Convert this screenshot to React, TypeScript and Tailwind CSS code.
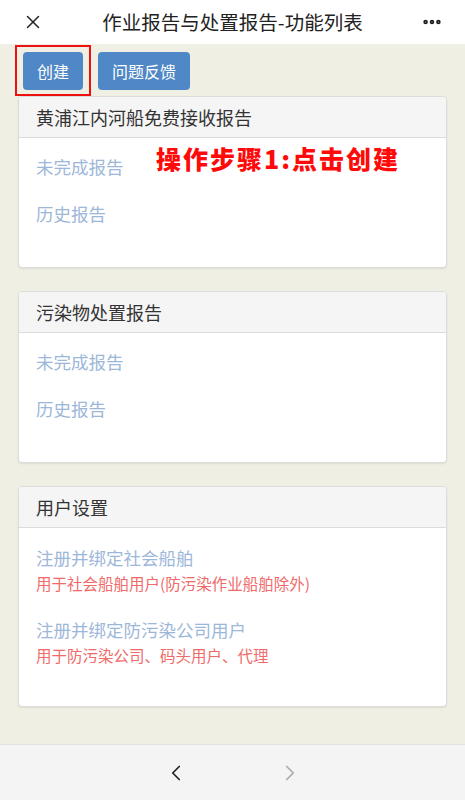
import { X, MoreHorizontal, ChevronLeft, ChevronRight } from 'lucide-react';

const font = { fontFamily: '"Noto Sans CJK SC", "Noto Sans", sans-serif' };

function Card({ title, children, bodyClass }: { title: string; children: React.ReactNode; bodyClass: string }) {
  return (
    <div className="mx-[18px] rounded-[4px] border border-[#dcdcdc] bg-white shadow-[0_1px_2px_rgba(0,0,0,0.08)] overflow-hidden">
      <div className="h-[41px] flex items-center px-[17px] bg-[#f5f5f5] border-b border-[#dcdcdc] text-[18px] text-[#333]">
        {title}
      </div>
      <div className={bodyClass}>{children}</div>
    </div>
  );
}

function Link({ children, className }: { children: React.ReactNode; className?: string }) {
  return <div className={'text-[17.5px] leading-[22px] text-[#9db7d9] ' + (className ?? '')}>{children}</div>;
}

export default function App() {
  return (
    <div className="w-[465px] h-[800px] flex flex-col bg-[#efefe3]" style={font}>
      <div className="h-[44px] bg-white flex items-center justify-between px-[22px] shrink-0">
        <X className="w-[22px] h-[22px] text-[#222]" strokeWidth={1.6} />
        <div className="text-[19.5px] text-[#222]">作业报告与处置报告-功能列表</div>
        <MoreHorizontal className="w-[22px] h-[22px] text-[#222]" strokeWidth={3} />
      </div>

      <div className="flex-1 flex flex-col">
        <div className="flex items-center gap-[7px] pl-[15px] h-[52px]">
          <div className="border-2 border-[#ee1111] p-[6px] pt-[5px] pb-[4px]">
            <button className="w-[60px] h-[38px] rounded-[4px] bg-[#5087c6] text-white text-[16px]">创建</button>
          </div>
          <button className="w-[92px] h-[38px] rounded-[4px] bg-[#5087c6] text-white text-[16px] mt-[1px]">问题反馈</button>
        </div>

        <div className="relative">
          <Card title="黄浦江内河船免费接收报告" bodyClass="px-[17px] pt-[18px] pb-[42px] flex flex-col gap-[25px]">
            <Link>未完成报告</Link>
            <Link>历史报告</Link>
          </Card>
          <div className="absolute left-[156px] top-[44px] text-[25px] font-black text-[#ff0a0a] tracking-[2px]">
            操作步骤1:点击创建
          </div>
        </div>

        <div className="mt-[23px]">
          <Card title="污染物处置报告" bodyClass="px-[17px] pt-[18px] pb-[42px] flex flex-col gap-[25px]">
            <Link>未完成报告</Link>
            <Link>历史报告</Link>
          </Card>
        </div>

        <div className="mt-[23px]">
          <Card title="用户设置" bodyClass="px-[17px] pt-[19px] pb-[40px] flex flex-col gap-[25px]">
            <div className="flex flex-col gap-[4px]">
              <Link>注册并绑定社会船舶</Link>
              <div className="text-[15.5px] leading-[21px] text-[#f06a6a]">用于社会船舶用户(防污染作业船舶除外)</div>
            </div>
            <div className="flex flex-col gap-[4px]">
              <Link>注册并绑定防污染公司用户</Link>
              <div className="text-[15.5px] leading-[21px] text-[#f06a6a]">用于防污染公司、码头用户、代理</div>
            </div>
          </Card>
        </div>
      </div>

      <div className="h-[56px] shrink-0 bg-[#f4f4f4] border-t border-[#e2e2dc] flex items-center justify-center gap-[88px]">
        <ChevronLeft className="w-[26px] h-[26px] text-[#222]" strokeWidth={1.6} />
        <ChevronRight className="w-[26px] h-[26px] text-[#aaa]" strokeWidth={1.6} />
      </div>
    </div>
  );
}
